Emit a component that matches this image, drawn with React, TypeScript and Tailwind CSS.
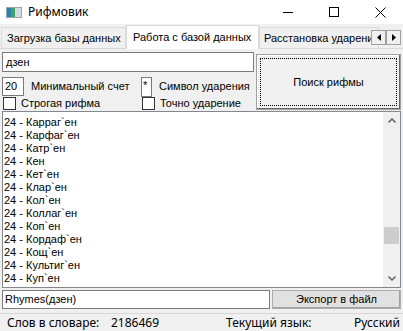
import React from "react";

const RHYMES = [
  "24 - Карраг`ен",
  "24 - Карфаг`ен",
  "24 - Катр`ен",
  "24 - Кен",
  "24 - Кет`ен",
  "24 - Клар`ен",
  "24 - Кол`ен",
  "24 - Коллаг`ен",
  "24 - Коп`ен",
  "24 - Кордаф`ен",
  "24 - Кощ`ен",
  "24 - Культиг`ен",
  "24 - Куп`ен",
];

function TitleBar() {
  return (
    <div className="h-[24px] bg-white flex items-center relative shrink-0">
      <svg width="16" height="11" viewBox="0 0 16 11" className="ml-[6px]">
        <rect x="0" y="0" width="16" height="11" fill="#9aa7b0" />
        <rect x="1" y="1" width="4" height="9" fill="#2d7fb8" />
        <rect x="5" y="1" width="4" height="9" fill="#3fa36a" />
        <rect x="9" y="1" width="6" height="9" fill="#d6dde2" />
      </svg>
      <span className="ml-[6px] font-['Noto_Sans',sans-serif] text-[12px] leading-none">
        Рифмовик
      </span>
      <div className="ml-auto flex items-center h-full">
        <div className="w-[46px] h-full flex items-center justify-center">
          <div className="w-[10px] h-px bg-black" />
        </div>
        <div className="w-[46px] h-full flex items-center justify-center">
          <div className="w-[10px] h-[10px] border border-black" />
        </div>
        <div className="w-[46px] h-full flex items-center justify-center">
          <svg width="11" height="11" viewBox="0 0 11 11">
            <path d="M0.5 0.5 L10.5 10.5 M10.5 0.5 L0.5 10.5" stroke="#000" strokeWidth="1" />
          </svg>
        </div>
      </div>
    </div>
  );
}

function Tabs() {
  return (
    <div className="h-[25px] flex items-end relative shrink-0 border-b border-[#d9d9d9]">
      <div className="ml-[1px] w-[125px] h-[21px] border border-b-0 border-[#d9d9d9] bg-[#f0f0f0] pl-[5px] flex items-center whitespace-nowrap">
        Загрузка базы данных
      </div>
      <div className="w-[133px] h-[24px] -mb-px border border-b-0 border-[#d9d9d9] bg-white pl-[6px] flex items-center whitespace-nowrap">
        Работа с базой данных
      </div>
      <div className="w-[120px] h-[21px] border border-b-0 border-[#d9d9d9] bg-[#f0f0f0] pl-[4px] flex items-center whitespace-nowrap overflow-hidden">
        Расстановка ударения
      </div>
      <div className="absolute right-[2px] top-[6px] flex">
        <div className="w-[15px] h-[15px] bg-[#f0f0f0] border border-[#a0a0a0] flex items-center justify-center">
          <svg width="4" height="7" viewBox="0 0 4 7">
            <path d="M4 0 L0 3.5 L4 7 Z" fill="#000" />
          </svg>
        </div>
        <div className="w-[15px] h-[15px] bg-[#f0f0f0] border border-[#a0a0a0] flex items-center justify-center">
          <svg width="4" height="7" viewBox="0 0 4 7">
            <path d="M0 0 L4 3.5 L0 7 Z" fill="#000" />
          </svg>
        </div>
      </div>
    </div>
  );
}

function CheckBox({ label }: { label: string }) {
  return (
    <div className="flex items-center">
      <div className="w-[13px] h-[13px] border border-[#333] bg-white" />
      <span className="ml-[5px]">{label}</span>
    </div>
  );
}

function Scrollbar() {
  return (
    <div className="w-[17px] h-full bg-[#f0f0f0] flex flex-col items-center">
      <div className="h-[17px] w-full flex items-center justify-center">
        <svg width="8" height="5" viewBox="0 0 8 5">
          <path d="M0.5 4.5 L4 1 L7.5 4.5" stroke="#606060" strokeWidth="1.5" fill="none" />
        </svg>
      </div>
      <div className="mt-[98px] w-[15px] h-[17px] bg-[#cdcdcd]" />
      <div className="mt-auto h-[17px] w-full flex items-center justify-center">
        <svg width="8" height="5" viewBox="0 0 8 5">
          <path d="M0.5 0.5 L4 4 L7.5 0.5" stroke="#606060" strokeWidth="1.5" fill="none" />
        </svg>
      </div>
    </div>
  );
}

export default function App() {
  return (
    <div className="w-[403px] h-[331px] bg-[#f0f0f0] flex flex-col overflow-hidden font-['Liberation_Sans',sans-serif] text-[11px] text-black">
      <TitleBar />
      <Tabs />

      <div className="flex-1 flex flex-col px-[2px]">
        {/* query controls + search button */}
        <div className="h-[62px] flex">
          <div className="w-[252px] pt-[3px] flex flex-col">
            <div className="h-[20px] bg-white border border-[#7a7a7a] flex items-center pl-[3px]">
              дзен
            </div>
            <div className="mt-[5px] h-[19px] flex items-center">
              <div className="w-[22px] h-[19px] bg-white border border-[#7a7a7a] flex items-center pl-[2px]">
                20
              </div>
              <span className="ml-[7px] w-[110px]">Минимальный счет</span>
              <div className="w-[11px] h-[20px] bg-white border border-[#7a7a7a] pl-[1px] leading-[14px]">
                *
              </div>
              <span className="ml-[7px]">Символ ударения</span>
            </div>
            <div className="h-[14px] flex items-center pl-[1px]">
              <div className="w-[139px]">
                <CheckBox label="Строгая рифма" />
              </div>
              <CheckBox label="Точно ударение" />
            </div>
          </div>
          <div className="ml-auto mt-[5px] w-[145px] h-[56px] border border-[#a0a0a0] bg-[#f0f0f0] shadow-[inset_-1px_-1px_0_#696969,inset_1px_1px_0_#fff] p-[3px]">
            <div className="w-full h-full border border-dotted border-black flex items-center justify-center">
              Поиск рифмы
            </div>
          </div>
        </div>

        {/* results list */}
        <div className="h-[177px] bg-white border border-[#828790] flex">
          <div className="flex-1 pl-px pt-[4px] leading-[13px] text-[11px]">
            {RHYMES.map((r) => (
              <div key={r} className="h-[13px] whitespace-nowrap">
                {r}
              </div>
            ))}
          </div>
          <Scrollbar />
        </div>

        {/* query line + export */}
        <div className="mt-[2px] h-[19px] flex">
          <div className="w-[268px] h-[19px] bg-white border border-[#7a7a7a] flex items-center pl-[2px]">
            Rhymes(дзен)
          </div>
          <div className="ml-auto w-[129px] h-[19px] bg-[#e1e1e1] border border-[#adadad] shadow-[inset_-1px_-1px_0_#a0a0a0] flex items-center justify-center">
            Экспорт в файл
          </div>
        </div>
      </div>

      {/* status bar */}
      <div className="mt-[1px] h-[18px] border-t border-[#d7d7d7] flex items-center font-['Noto_Sans',sans-serif] text-[12px] shrink-0">
        <span className="ml-[7px] w-[104px]">Слов в словаре:</span>
        <span className="w-[115px]">2186469</span>
        <span className="w-[128px]">Текущий язык:</span>
        <span>Русский</span>
      </div>
    </div>
  );
}
